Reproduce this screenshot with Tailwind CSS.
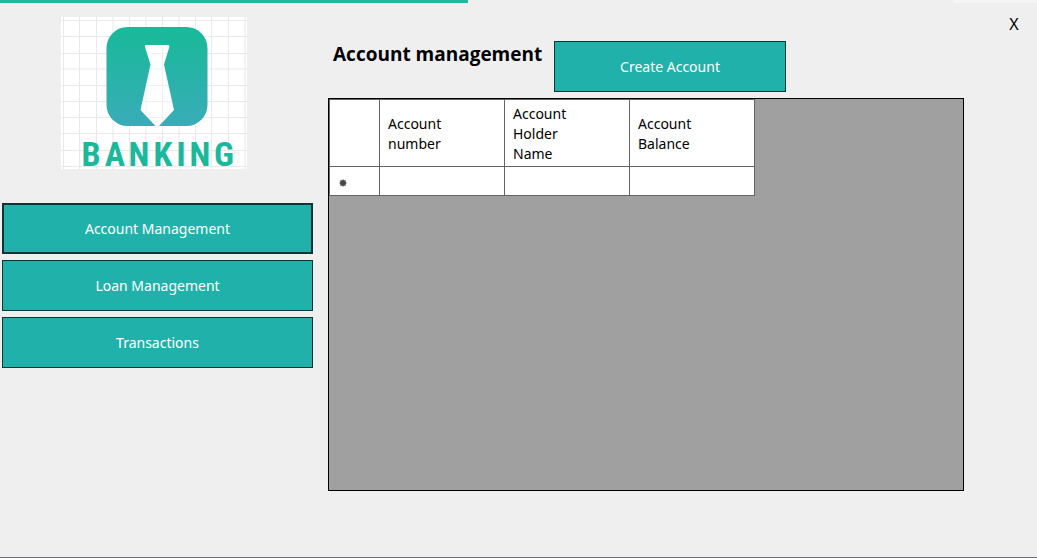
<!DOCTYPE html>
<html lang="en">
<head>
<meta charset="utf-8">
<meta name="viewport" content="width=device-width, initial-scale=1">
<title>Banking - Account management</title>
<script src="https://cdn.jsdelivr.net/npm/@tailwindcss/browser@4"></script>
</head>
<body class="flex min-h-screen flex-col border-b border-[#636b9b] bg-[#efefef] font-['Noto_Sans','Open_Sans',sans-serif] text-sm leading-5 text-black">
  <div class="flex h-[3px] justify-between">
    <div class="w-[468px] bg-[#1abc9c]"></div>
    <div class="w-[84px] bg-[#f5f5f5]"></div>
  </div>
  <div class="flex flex-1">
    <aside class="w-[313px] shrink-0 pl-[2px] pt-[14px]">
      <svg class="ml-[59px] block overflow-visible" width="186" height="152" viewBox="0 0 186 152" role="img" aria-label="Banking logo">
        <defs>
          <linearGradient id="tile" x1="0" y1="0" x2="0" y2="1">
            <stop offset="0.1" stop-color="#1bb89b"/>
            <stop offset="1" stop-color="#39acb8"/>
          </linearGradient>
        </defs>
        <rect width="186" height="152" fill="#fff"/>
        <path d="M2.500 0V152M18.500 0V152M35.500 0V152M52 0V152M68.500 0V152M85 0V152M101.500 0V152M118 0V152M134.500 0V152M150.500 0V152M167.500 0V152M184 0V152M0 3.500H186M0 19.500H186M0 36.500H186M0 52H186M0 68.500H186M0 84.500H186M0 100.500H186M0 116.500H186M0 133.500H186M0 149.500H186" stroke="#e9e9e9"/>
        <rect x="45.500" y="10" width="101" height="99" rx="21" fill="url(#tile)"/>
        <path d="M85 28H107Q109 28 108.300 30L103 47.500L113 93L98 109H94.500L79.500 93L89.500 47.500L84 30Q83.500 28 85 28Z" fill="#fff"/>
        <path d="M85 71V98M101.500 28V104M87 36.500H106M90 52H103M86 68.500H107M82 84.500H111M87 100.500H105" stroke="#f0f0f0"/>
        <text x="30 54 78 102 120 139 163" y="149" text-anchor="middle" font-family="'Roboto Condensed','DejaVu Sans Condensed',sans-serif" font-weight="700" font-size="34" fill="#1bb89b">BANKING</text>
      </svg>
      <nav class="mt-[34px] flex flex-col gap-[6px] text-white">
        <button type="button" class="h-[51px] border-2 border-[#0a3533] bg-[#20b2aa]">Account Management</button>
        <button type="button" class="h-[51px] border border-[#0a3533] bg-[#20b2aa]">Loan Management</button>
        <button type="button" class="h-[51px] border border-[#0a3533] bg-[#20b2aa]">Transactions</button>
      </nav>
    </aside>
    <main class="ml-[15px] flex min-w-0 flex-1 flex-col pb-[66px]">
      <header class="flex h-[95px] items-start">
        <h1 class="w-[226px] shrink-0 whitespace-nowrap pl-[5px] pt-[37px] font-['Open_Sans',sans-serif] text-[19px] font-bold leading-7">Account management</h1>
        <button type="button" class="mt-[38px] h-[51px] w-[232px] border border-[#0a3533] bg-[#20b2aa] text-white">Create Account</button>
        <button type="button" aria-label="Close" class="ml-auto mr-[13px] mt-[11px] w-5 text-base leading-5">X</button>
      </header>
      <section class="mr-[73px] flex-1 border border-black bg-[#a0a0a0]">
        <table class="w-[426px] table-fixed border-collapse bg-white text-left">
          <colgroup><col class="w-[50px]"><col class="w-[125px]"><col class="w-[125px]"><col class="w-[125px]"></colgroup>
          <thead>
            <tr class="h-[67px]">
              <th class="border border-[#646464]"></th>
              <th class="border border-[#646464] pl-2 pr-10 pt-[2px] font-normal">Account number</th>
              <th class="border border-[#646464] pl-2 pr-10 pt-[2px] font-normal">Account Holder Name</th>
              <th class="border border-[#646464] pl-2 pr-10 pt-[2px] font-normal">Account Balance</th>
            </tr>
          </thead>
          <tbody>
            <tr class="h-[29px]">
              <td class="border border-[#646464] pl-[9px]">
                <svg class="mt-1 block" width="8" height="8" viewBox="0 0 8 8" aria-hidden="true">
                  <path d="M4 0V8M0 4H8M1 1L7 7M7 1L1 7" stroke="#999"/>
                  <circle cx="4" cy="4" r="3" fill="#484848"/>
                </svg>
              </td>
              <td class="border border-[#646464]"></td>
              <td class="border border-[#646464]"></td>
              <td class="border border-[#646464]"></td>
            </tr>
          </tbody>
        </table>
      </section>
    </main>
  </div>
</body>
</html>
